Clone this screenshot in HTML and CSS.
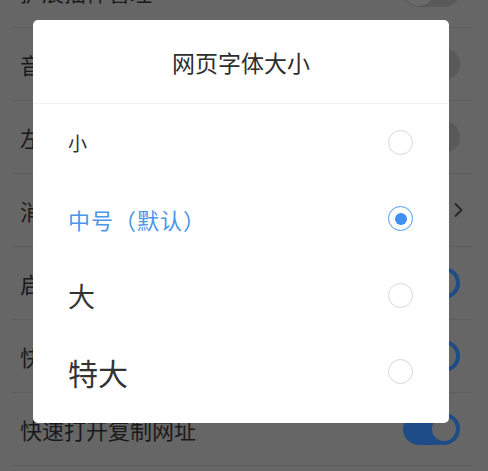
FILE: index.html
```html
<!DOCTYPE html>
<html lang="zh-CN">
<head>
<meta charset="utf-8">
<title>网页字体大小</title>
<link rel="stylesheet" href="styles.css">
</head>
<body>
<div class="settings">
  <div class="row"><span class="label">扩展插件管理</span><span class="switch off"><span class="thumb"></span></span></div>
  <div class="row"><span class="label">音量键翻页</span><span class="switch off"><span class="thumb"></span></span></div>
  <div class="row"><span class="label">左右滑动切换标签</span><span class="switch off"><span class="thumb"></span></span></div>
  <div class="row"><span class="label">消息通知设置</span>
    <svg class="chev" width="10" height="16" viewBox="0 0 10 16"><polyline points="2,1.5 8.5,8 2,14.5" fill="none" stroke="#262626" stroke-width="1.8"/></svg>
  </div>
  <div class="row"><span class="label">启动时恢复标签页</span><span class="switch on"><span class="thumb"></span></span></div>
  <div class="row"><span class="label">快捷搜索</span><span class="switch on"><span class="thumb"></span></span></div>
  <div class="row"><span class="label">快速打开复制网址</span><span class="switch on"><span class="thumb"></span></span></div>
</div>

<div class="overlay">
  <div class="dialog">
    <div class="dialog-title">网页字体大小</div>
    <div class="options">
      <div class="option"><span class="opt-text size-s">小</span><span class="radio"></span></div>
      <div class="option selected"><span class="opt-text size-m">中号（默认）</span><span class="radio checked"></span></div>
      <div class="option"><span class="opt-text size-l">大</span><span class="radio"></span></div>
      <div class="option"><span class="opt-text size-xl">特大</span><span class="radio"></span></div>
    </div>
  </div>
</div>
</body>
</html>
```

FILE: styles.css
```css
* { box-sizing: border-box; }

html, body {
  margin: 0;
  padding: 0;
  width: 488px;
  height: 471px;
  overflow: hidden;
}

body {
  background: #666666;
  font-family: "Noto Sans CJK SC", "Noto Sans", sans-serif;
  position: relative;
}

.settings {
  margin-top: -45px;
}

.row {
  height: 73px;
  margin: 0 16px 0 13px;
  padding: 0 12px 0 7px;
  border-bottom: 1px solid #5d5d5d;
  display: flex;
  align-items: center;
  justify-content: space-between;
}

.label {
  font-size: 22px;
  color: #1a1a1a;
  line-height: 1;
}

.switch {
  width: 57px;
  height: 32px;
  border-radius: 16px;
  display: flex;
  align-items: center;
  padding: 1px;
}

.switch.off {
  background: #595959;
  justify-content: flex-start;
}

.switch.off .thumb {
  width: 30px;
  height: 30px;
  border-radius: 50%;
  background: #6a6a6a;
}

.switch.on {
  background: #1e4c86;
  justify-content: flex-end;
}

.switch.on .thumb {
  width: 30px;
  height: 30px;
  border-radius: 50%;
  background: #666666;
  border: 3px solid #1e4c86;
}

.chev {
  margin-right: -3px;
}

.overlay {
  position: absolute;
  top: 0;
  left: 0;
  right: 0;
  bottom: 0;
  padding: 20px 0 0 33px;
}

.dialog {
  width: 416px;
  height: 403px;
  background: #ffffff;
  border-radius: 5px;
  display: flex;
  flex-direction: column;
}

.dialog-title {
  height: 84px;
  border-bottom: 1px solid #f1f1f1;
  display: flex;
  align-items: center;
  justify-content: center;
  font-size: 23px;
  color: #2e2e2e;
  line-height: 1;
  padding-top: 2px;
}

.option {
  height: 76.5px;
  display: flex;
  align-items: center;
  justify-content: space-between;
  padding: 0 36px 0 35px;
}

.opt-text {
  color: #333333;
  line-height: 1;
}

.size-s { font-size: 19px; }
.size-m { font-size: 22px; letter-spacing: 1px; }
.size-l { font-size: 27px; }
.size-xl { font-size: 30px; }

.option.selected .opt-text {
  color: #4a96ea;
}

.radio {
  width: 25px;
  height: 25px;
  border-radius: 50%;
  border: 1.5px solid #d8d8d8;
  display: flex;
  align-items: center;
  justify-content: center;
}

.radio.checked {
  border-color: #4b9bf5;
}

.radio.checked::after {
  content: "";
  width: 12px;
  height: 12px;
  border-radius: 50%;
  background: #3f90f2;
}
```
